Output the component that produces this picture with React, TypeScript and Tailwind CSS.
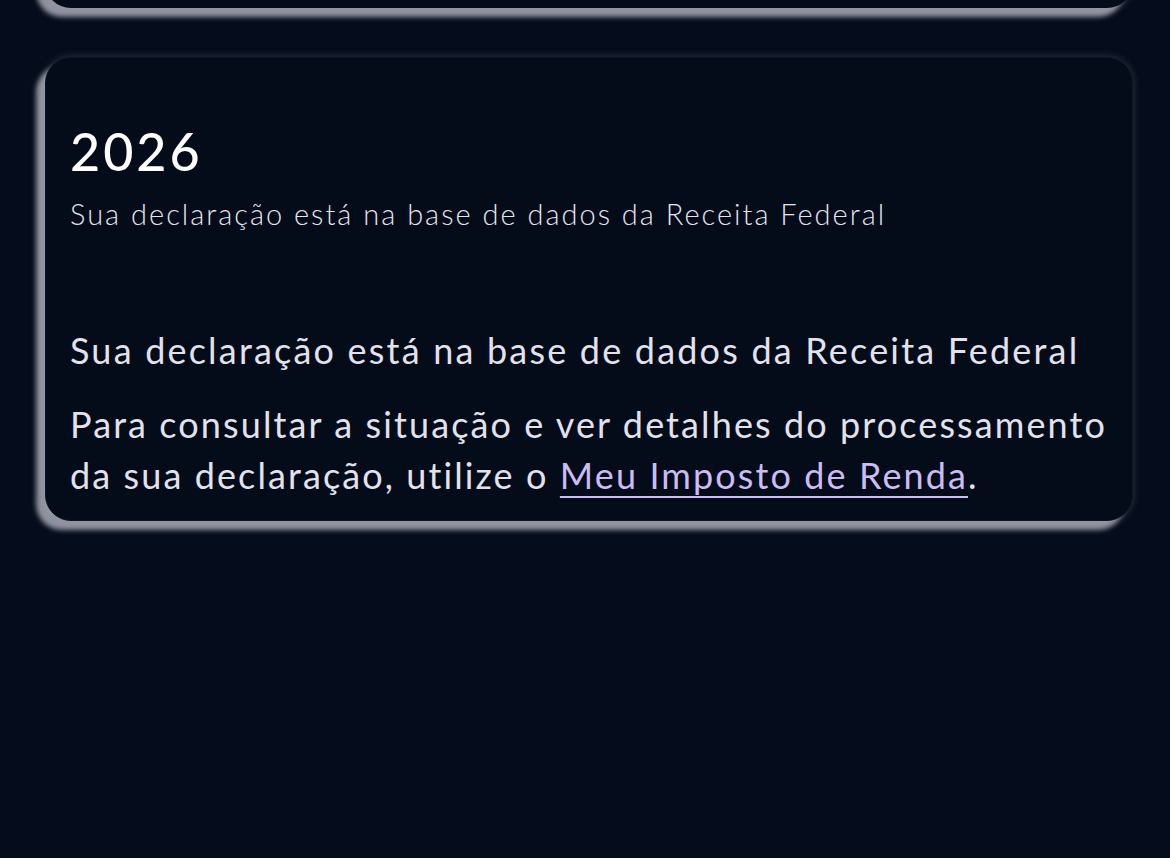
import React from 'react'

const cardShadow =
  'shadow-[-9px_9px_5px_rgba(168,170,180,0.85),0_0_8px_rgba(130,136,150,0.35)]'

function DeclarationCard() {
  return (
    <div
      className={`rounded-[26px] bg-[#040b19] border border-[#0d1424] ${cardShadow} pl-[24px] pr-[16px] pt-[65px] pb-[19px]`}
    >
      <h2 className="text-[52px] leading-[56px] font-medium text-white tracking-[3px]">2026</h2>
      <p className="mt-[17px] text-[29px] leading-[36px] text-[#e4e4ee] font-light tracking-[2px]">
        Sua declaração está na base de dados da Receita Federal
      </p>
      <p className="mt-[93px] text-[36px] leading-[50px] text-[#e2e2ec] tracking-[2.2px]">
        Sua declaração está na base de dados da Receita Federal
      </p>
      <p className="mt-[24px] text-[36px] leading-[51px] text-[#e2e2ec] tracking-[2.1px]">
        Para consultar a situação e ver detalhes do processamento da sua declaração, utilize o{' '}
        <a href="#" className="text-[#cbbcf2] underline underline-offset-[7px] decoration-[2px]">
          Meu Imposto de Renda
        </a>
        .
      </p>
    </div>
  )
}

export default function App() {
  return (
    <div
      className="min-h-screen bg-[#050c1b] pl-[45px] pr-[37px] overflow-hidden"
      style={{ fontFamily: 'Lato, "Open Sans", sans-serif' }}
    >
      <div className={`-mt-[92px] h-[100px] rounded-[26px] bg-[#040b19] ${cardShadow}`} />
      <div className="mt-[49px]">
        <DeclarationCard />
      </div>
    </div>
  )
}
